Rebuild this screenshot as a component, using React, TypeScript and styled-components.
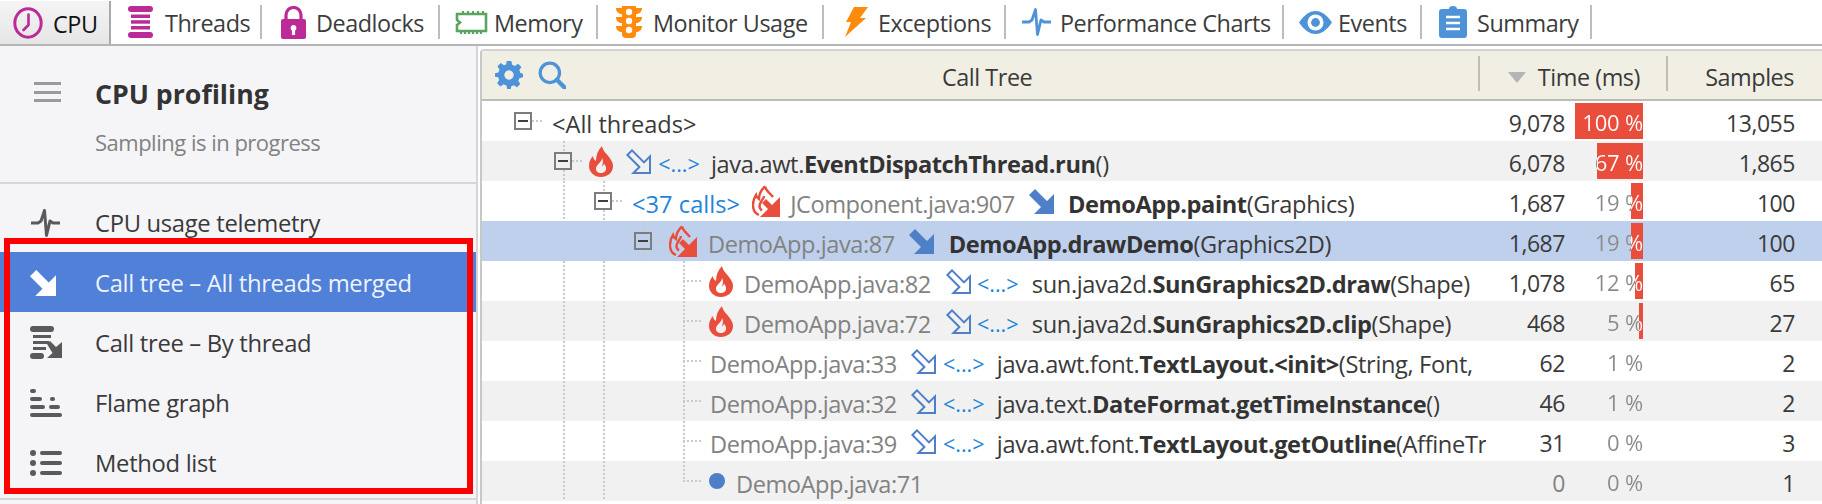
import React from "react";
import styled, { createGlobalStyle } from "styled-components";

const FONT = `"Open Sans", "Noto Sans", "Liberation Sans", sans-serif`;
const RED = "#e94e3d";
const BLUE = "#4e93d8";
const ARROW = "#4f7fc9";
const MAG = "#bb2a96";

const Global = createGlobalStyle`
  html, body { margin: 0; padding: 0; background: #fff; overflow: hidden; }
  body { font-family: ${FONT}; color: #333; }
  * { box-sizing: border-box; }
`;

const Page = styled.div`
  width: 1822px;
  height: 504px;
  display: flex;
  flex-direction: column;
  position: relative;
  overflow: hidden;
`;

/* ---------- toolbar ---------- */
const Toolbar = styled.div`
  height: 46px;
  flex: none;
  display: flex;
  border-bottom: 2px solid #b5b5b5;
`;
const Tab = styled.div<{ $w: number; $pl: number; $gap: number }>`
  width: ${(p) => p.$w}px;
  height: 44px;
  padding-left: ${(p) => p.$pl}px;
  display: flex;
  align-items: center;
  gap: ${(p) => p.$gap}px;
  position: relative;
  font-size: 23.4px;
  letter-spacing: -0.45px;
  color: #3c3c3c;
  &::after {
    content: "";
    position: absolute;
    right: 0;
    top: 5px;
    bottom: 5px;
    width: 2px;
    background: #bdbdbd;
  }
`;
const ActiveTab = styled(Tab)`
  background: linear-gradient(#f4f4f4, #e6e6e6);
  color: #111;
  margin-top: 1px;
  height: 43px;
  &::after {
    top: 0;
    bottom: 0;
    background: #a9a9a9;
  }
`;
const TabLabel = styled.span`
  margin-top: 2px;
`;

/* ---------- body ---------- */
const Body = styled.div`
  flex: 1;
  display: flex;
  min-height: 0;
`;
const Sidebar = styled.aside`
  width: 478px;
  flex: none;
  background: #f5f5f8;
  border-right: 2px solid #d6d6d8;
  display: flex;
  flex-direction: column;
  padding-top: 2px;
`;
const SideHead = styled.div`
  height: 136px;
  border-bottom: 2px solid #d6d6d8;
  display: grid;
  grid-template-columns: 95px 1fr;
  align-content: start;
`;
const Burger = styled.div`
  margin: 34px 0 0 34px;
  width: 27px;
  height: 20px;
  border-top: 3px solid #9a9a9a;
  border-bottom: 3px solid #9a9a9a;
  position: relative;
  &::after {
    content: "";
    position: absolute;
    left: 0;
    right: 0;
    top: 5.5px;
    height: 3px;
    background: #9a9a9a;
  }
`;
const SideTitle = styled.div`
  margin-top: 26px;
  font-size: 26.7px;
  font-weight: 700;
  line-height: 40px;
  letter-spacing: 0;
  color: #333;
`;
const SideSub = styled.div`
  grid-column: 2;
  margin-top: 13px;
  font-size: 22px;
  line-height: 30px;
  letter-spacing: -0.5px;
  color: #828282;
`;
const SideList = styled.div`
  padding-top: 8px;
  flex: 1;
`;
const SideItem = styled.div<{ $active?: boolean }>`
  height: 60px;
  display: flex;
  align-items: center;
  padding: 1px 0 0 30px;
  font-size: 23.8px;
  letter-spacing: -0.32px;
  color: ${(p) => (p.$active ? "#eef3fb" : "#3a3a3a")};
  background: ${(p) => (p.$active ? "#5080d8" : "transparent")};
`;
const SideIcon = styled.span`
  width: 65px;
  flex: none;
  display: flex;
  align-items: center;
`;
const SideFoot = styled.div`
  height: 6px;
  border-top: 2px solid #d6d6d8;
  flex: none;
`;
const Highlight = styled.div`
  position: absolute;
  left: 4px;
  top: 238px;
  width: 469px;
  height: 256px;
  border: 6px solid #ff0000;
  pointer-events: none;
`;

/* ---------- tree table ---------- */
const Panel = styled.section`
  flex: 1;
  margin: 3px 0 0 2px;
  border-top: 2px solid #d2d2d2;
  border-left: 2px solid #c8c8c8;
  border-top-left-radius: 4px;
  min-width: 0;
  overflow: hidden;
`;
const Head = styled.div`
  height: 50px;
  display: grid;
  grid-template-columns: 997px 188px 1fr;
  background: #f1efe4;
  border-bottom: 2px solid #bdbcb4;
  font-size: 23.4px;
  letter-spacing: -0.45px;
  color: #3a3a3a;
`;
const HeadMain = styled.div`
  display: flex;
  align-items: center;
  padding-left: 13px;
  gap: 15px;
  position: relative;
`;
const HeadTitle = styled.span`
  margin: 3px 0 0 361px;
`;
const HeadCol = styled.div<{ $pr: number }>`
  display: flex;
  align-items: center;
  justify-content: flex-end;
  gap: 12px;
  padding: 3px ${(p) => p.$pr}px 0 0;
  position: relative;
  &::before {
    content: "";
    position: absolute;
    left: -1px;
    top: 5px;
    bottom: 8px;
    width: 2px;
    background: #bfbeb6;
  }
`;
const SortMark = styled.span`
  width: 0;
  height: 0;
  border-left: 9px solid transparent;
  border-right: 9px solid transparent;
  border-top: 11px solid #b5b5b5;
  margin-top: 2px;
`;
const Row = styled.div<{ $tone: "plain" | "alt" | "sel" }>`
  height: 40px;
  display: grid;
  grid-template-columns: 1004px 79px 78px 152px;
  position: relative;
  background: ${(p) => (p.$tone === "sel" ? "#bfd0ec" : p.$tone === "alt" ? "#f1f1f1" : "#fff")};
`;
const TreeCell = styled.div<{ $indent: number }>`
  padding: 5px 0 0 ${(p) => p.$indent}px;
  display: flex;
  align-items: center;
  overflow: hidden;
  white-space: nowrap;
  font-size: 23.6px;
  letter-spacing: -0.35px;
  color: #3a3a3a;
`;
const VGuide = styled.span<{ $x: number; $from: number; $to: number }>`
  position: absolute;
  left: ${(p) => p.$x}px;
  top: ${(p) => p.$from}px;
  height: ${(p) => p.$to - p.$from}px;
  width: 2px;
  background: repeating-linear-gradient(#cacaca 0 2px, transparent 2px 4px);
`;
const HGuide = styled.span<{ $x: number; $w: number }>`
  position: absolute;
  left: ${(p) => p.$x}px;
  top: 19px;
  width: ${(p) => p.$w}px;
  height: 2px;
  background: repeating-linear-gradient(90deg, #cacaca 0 2px, transparent 2px 4px);
`;
const Expander = styled.span`
  width: 18px;
  height: 18px;
  flex: none;
  margin-top: -5px;
  border: 2px solid #7d7d7d;
  display: flex;
  align-items: center;
  justify-content: center;
  &::after {
    content: "";
    width: 10px;
    height: 2px;
    background: #3f3f3f;
  }
`;
const Slot = styled.span<{ $ml: number }>`
  margin: -5px 0 0 ${(p) => p.$ml}px;
  display: inline-flex;
  flex: none;
  align-items: center;
`;
const Dim = styled.span<{ $ml: number }>`
  margin-left: ${(p) => p.$ml}px;
  color: #828282;
  letter-spacing: -0.45px;
`;
const Plain = styled.span<{ $ml: number }>`
  margin-left: ${(p) => p.$ml}px;
`;
const RootLabel = styled(Plain)`
  letter-spacing: 0;
`;
const LinkText = styled.span<{ $ml: number }>`
  margin-left: ${(p) => p.$ml}px;
  color: #1f84dc;
  letter-spacing: 0.05px;
`;
const Dots = styled.span<{ $ml: number }>`
  margin-left: ${(p) => p.$ml}px;
  width: 42px;
  flex: none;
  color: #1f84dc;
  font-size: 21.5px;
  letter-spacing: 0;
  text-align: center;
`;
const Strong = styled.b`
  font-weight: 700;
  letter-spacing: -0.42px;
  color: #333;
`;
const Dot = styled.span`
  width: 16px;
  height: 16px;
  margin-top: -5px;
  border-radius: 50%;
  background: ${ARROW};
  flex: none;
`;
const Num = styled.div<{ $dim?: boolean }>`
  display: flex;
  align-items: center;
  justify-content: flex-end;
  padding-top: 4px;
  font-size: 23px;
  letter-spacing: -0.45px;
  color: ${(p) => (p.$dim ? "#828282" : "#3a3a3a")};
`;
const PctCell = styled.div`
  position: relative;
  margin-left: 10px;
  width: 68px;
  padding-top: 2px;
  display: flex;
  align-items: center;
  justify-content: flex-end;
  font-size: 22px;
  letter-spacing: -0.2px;
  white-space: nowrap;
`;
const PctBar = styled.span<{ $w: number }>`
  position: absolute;
  right: 0;
  top: 2px;
  bottom: 2px;
  width: ${(p) => p.$w}px;
  background: ${RED};
`;
const PctText = styled.span<{ $w: number }>`
  position: relative;
  color: transparent;
  background: linear-gradient(
    to left,
    #fff ${(p) => p.$w}px,
    #8a8a8a ${(p) => p.$w}px
  );
  -webkit-background-clip: text;
  background-clip: text;
`;

/* ---------- drawings ---------- */
const Svg = styled.svg`
  display: block;
  flex: none;
`;

const ClockIcon = () => (
  <Svg width="30" height="32" viewBox="0 0 30 32">
    <ellipse cx="15" cy="16" rx="13.2" ry="14.2" fill="none" stroke={MAG} strokeWidth="3" />
    <path d="M15.5 7.5 V18 L10.5 23" fill="none" stroke={MAG} strokeWidth="2.6" strokeLinecap="round" strokeLinejoin="round" />
  </Svg>
);
const ThreadsIcon = () => (
  <Svg width="25" height="32" viewBox="0 0 25 32" fill={MAG}>
    <rect x="0" y="0" width="25" height="6" rx="3" />
    <rect x="3" y="8.5" width="19" height="3.5" />
    <rect x="3" y="14.2" width="19" height="3.5" />
    <rect x="3" y="20" width="19" height="3.5" />
    <rect x="0" y="26" width="25" height="6" rx="3" />
  </Svg>
);
const LockIcon = () => (
  <Svg width="25" height="33" viewBox="0 0 25 33">
    <path d="M5 14 V9 a7.5 7.5 0 0 1 15 0 V14" fill="none" stroke={MAG} strokeWidth="3.2" />
    <path fillRule="evenodd" fill={MAG} d="M2 13 H23 a2 2 0 0 1 2 2 V31 a2 2 0 0 1 -2 2 H2 a2 2 0 0 1 -2 -2 V15 a2 2 0 0 1 2 -2 Z M12.5 19 a3 3 0 0 0 -1.6 5.5 V29 h3.2 V24.5 A3 3 0 0 0 12.5 19 Z" />
  </Svg>
);
const MemoryIcon = () => (
  <Svg width="33" height="25" viewBox="0 0 33 25">
    <path d="M2 4 H31 V21 H2 V15 L5 12.5 L2 10 Z" fill="none" stroke="#5aa45f" strokeWidth="2.6" />
    <path d="M8 1 V4 M13 1 V4 M18 1 V4 M23 1 V4 M28 1 V4 M6 21 V24 M10 21 V24 M14 21 V24 M18 21 V24 M22 21 V24 M26 21 V24" stroke="#5aa45f" strokeWidth="2.2" />
  </Svg>
);
const TrafficIcon = () => (
  <Svg width="26" height="32" viewBox="0 0 26 32">
    <path d="M0 2 H6 V0 H20 V2 H26 C26 6 23 8 20 8 V11 H26 C26 15 23 17 20 17 V20 H26 C26 24 23 26 20 26 V28 a4 4 0 0 1 -4 4 H10 a4 4 0 0 1 -4 -4 V26 C3 26 0 24 0 20 H6 V17 C3 17 0 15 0 11 H6 V8 C3 8 0 6 0 2 Z" fill="#ff8b0d" />
    <circle cx="13" cy="6" r="3.2" fill="#fff" />
    <circle cx="13" cy="15" r="3.2" fill="#fff" />
    <circle cx="13" cy="24" r="3.2" fill="#fff" />
  </Svg>
);
const BoltIcon = () => (
  <Svg width="23" height="30" viewBox="0 0 23 30">
    <path d="M9 0 H23 L15 11 H21 L0 30 L6 15 H1 Z" fill="#ff8b0d" />
  </Svg>
);
const PulseIcon = ({ color, w, h, sw }: { color: string; w: number; h: number; sw: number }) => (
  <Svg width={w} height={h} viewBox="0 0 31 28">
    <path d="M1 14 H8 L11 12 L14.5 1.5 L16.5 26.5 L20 12 L23 14 H30" fill="none" stroke={color} strokeWidth={sw} strokeLinejoin="round" />
  </Svg>
);
const EyeIcon = () => (
  <Svg width="33" height="23" viewBox="0 0 33 23">
    <path d="M0 11.5 C6 3 11 0 16.5 0 S27 3 33 11.5 C27 20 22 23 16.5 23 S6 20 0 11.5 Z" fill={BLUE} />
    <circle cx="16.5" cy="11.5" r="8" fill="#fff" />
    <circle cx="16.5" cy="11.5" r="4.4" fill={BLUE} />
  </Svg>
);
const ClipIcon = () => (
  <Svg width="28" height="32" viewBox="0 0 28 32">
    <path d="M3 3 H10 a4 3 0 0 1 8 0 H25 a3 3 0 0 1 3 3 V29 a3 3 0 0 1 -3 3 H3 a3 3 0 0 1 -3 -3 V6 a3 3 0 0 1 3 -3 Z" fill={BLUE} />
    <path d="M7 11 H21 M7 17 H21 M7 23 H21" stroke="#fff" strokeWidth="2.4" />
  </Svg>
);
const GearIcon = () => (
  <Svg width="28" height="28" viewBox="0 0 24 24">
    <path
      fill={BLUE}
      fillRule="evenodd"
      d="M10 0 H14 L14.7 3.2 A9 9 0 0 1 17 4.2 L19.8 2.4 L22.6 5.2 L20.8 8 A9 9 0 0 1 21.8 10.3 L24 11 V14 L20.9 14.7 A9 9 0 0 1 19.9 17 L21.7 19.8 L18.9 22.6 L16.1 20.8 A9 9 0 0 1 14 21.7 L13.5 24 H10.5 L9.8 21 A9 9 0 0 1 7.4 20 L4.6 21.8 L1.8 19 L3.6 16.2 A9 9 0 0 1 2.7 14 L0 13.5 V10.5 L2.9 9.8 A9 9 0 0 1 3.9 7.4 L2.1 4.6 L4.9 1.8 L7.7 3.6 A9 9 0 0 1 9.6 2.9 Z M12 8 a4 4 0 1 0 0.01 0 Z"
    />
  </Svg>
);
const SearchIcon = () => (
  <Svg width="28" height="28" viewBox="0 0 26 26">
    <circle cx="11" cy="11" r="9" fill="none" stroke={BLUE} strokeWidth="3" />
    <path d="M17.5 17.5 L24.5 24.5" stroke={BLUE} strokeWidth="4" strokeLinecap="round" />
  </Svg>
);
const SolidFlame = () => (
  <Svg width="24" height="31" viewBox="0 0 24 31">
    <path
      fill={RED}
      fillRule="evenodd"
      d="M13 0 C14 5 17 7 20 11 C23 15 24 17 24 20 C24 27 18 31 12 31 C5 31 0 26 0 20 C0 15 2 12 4 10 C4 12 5 14 7 15 C7 9 9 4 13 0 Z M13 12 C13 16 8 18 7 22 C6.5 25 9 27 12 27 C15.5 27 17.5 24.5 17 21.5 C16.7 19.5 15.5 19 15 17.5 C14.5 19 14 20 13 20.5 C14 17 14.5 15 13 12 Z"
    />
  </Svg>
);
const ArrowFlame = () => (
  <Svg width="28" height="32" viewBox="0 0 28 32">
    <path
      d="M13 1.5 C14 6 18 8 21 12 M13 1.5 C9 5 7 9 7 14 C5.5 13 4.5 12 4 10 C2 13 1 16 1 20 C1 25 3.5 28.5 7 30"
      fill="none"
      stroke={RED}
      strokeWidth="2.4"
    />
    <path d="M12 11 C12 14 7.5 17 7.5 21 C7.5 23 8.5 24.5 10 25.5" fill="none" stroke={RED} strokeWidth="2.4" />
    <path d="M14 14 L20 20 L28 12 V32 H8 L16 24 L10 18 Z" fill={RED} />
  </Svg>
);
const SolidArrow = ({ color = ARROW, w = 25 }: { color?: string; w?: number }) => (
  <Svg width={w} height={w} viewBox="0 0 25 25">
    <path d="M0 6 L6 0 L18 12 L25 5 V25 H5 L12 18 Z" fill={color} />
  </Svg>
);
const HollowArrow = () => (
  <Svg width="25" height="25" viewBox="0 0 25 25">
    <path d="M1.4 6 L6 1.4 L18 13.4 L24 7.4 V24 H7.4 L13.4 18 Z" fill="none" stroke={ARROW} strokeWidth="2" />
  </Svg>
);
const ByThreadIcon = () => (
  <Svg width="33" height="33" viewBox="0 0 33 33" fill="#5a5a5a">
    <rect x="0" y="0" width="24" height="6" rx="3" />
    <rect x="3" y="9" width="18" height="3" />
    <rect x="3" y="15" width="16" height="3" />
    <rect x="3" y="21" width="13" height="3" />
    <rect x="0" y="27" width="14" height="6" rx="3" />
    <path d="M17 18 L20 15 L26 21 L32 16 V32 H17 L22.5 27 Z" />
  </Svg>
);
const FlameGraphIcon = () => (
  <Svg width="32" height="28" viewBox="0 0 32 28" fill="#5a5a5a">
    <rect x="0" y="0" width="6" height="4" rx="2" />
    <rect x="0" y="8" width="12" height="4" rx="2" />
    <rect x="20" y="8" width="5" height="4" rx="2" />
    <rect x="0" y="16" width="15" height="4" rx="2" />
    <rect x="19" y="16" width="11" height="4" rx="2" />
    <rect x="0" y="24" width="32" height="4" rx="2" />
  </Svg>
);
const ListIcon = () => (
  <Svg width="32" height="26" viewBox="0 0 32 26" fill="#5a5a5a">
    <circle cx="3" cy="3" r="3" />
    <circle cx="3" cy="13" r="3" />
    <circle cx="3" cy="23" r="3" />
    <rect x="10" y="1" width="22" height="4" rx="2" />
    <rect x="10" y="11" width="22" height="4" rx="2" />
    <rect x="10" y="21" width="22" height="4" rx="2" />
  </Svg>
);

/* ---------- data ---------- */
const tabs = [
  { w: 151, pl: 17, gap: 12, icon: <ThreadsIcon />, label: "Threads" },
  { w: 178, pl: 19, gap: 10, icon: <LockIcon />, label: "Deadlocks" },
  { w: 158, pl: 15, gap: 6, icon: <MemoryIcon />, label: "Memory" },
  { w: 226, pl: 18, gap: 11, icon: <TrafficIcon />, label: "Monitor Usage" },
  { w: 182, pl: 21, gap: 10, icon: <BoltIcon />, label: "Exceptions" },
  { w: 278, pl: 15, gap: 8, icon: <PulseIcon color={BLUE} w={31} h={28} sw={2.8} />, label: "Performance Charts" },
  { w: 138, pl: 15, gap: 6, icon: <EyeIcon />, label: "Events" },
  { w: 170, pl: 17, gap: 10, icon: <ClipIcon />, label: "Summary" },
];

const V = (x: number, from = 0, to = 40) => <VGuide key={`${x}-${from}`} $x={x} $from={from} $to={to} />;

type RowData = {
  tone: "plain" | "alt" | "sel";
  indent: number;
  guides: React.ReactNode;
  tree: React.ReactNode;
  time: string;
  timeDim?: boolean;
  pct: string;
  bar: number;
  samples: string;
};

const leafGuides = (
  <>
    {V(81)}
    {V(121)}
    {V(201)}
    <HGuide $x={201} $w={20} />
  </>
);

const rows: RowData[] = [
  {
    tone: "plain",
    indent: 32,
    guides: <HGuide $x={50} $w={10} />,
    tree: (
      <>
        <Expander />
        <RootLabel $ml={20}>{"<All threads>"}</RootLabel>
      </>
    ),
    time: "9,078",
    pct: "100 %",
    bar: 68,
    samples: "13,055",
  },
  {
    tone: "alt",
    indent: 72,
    guides: (
      <>
        {V(81, 0, 11)}
        {V(81, 29, 40)}
        <HGuide $x={90} $w={10} />
      </>
    ),
    tree: (
      <>
        <Expander />
        <Slot $ml={17}><SolidFlame /></Slot>
        <Slot $ml={13}><HollowArrow /></Slot>
        <Dots $ml={7}>{"<...>"}</Dots>
        <Plain $ml={11}>java.awt.<Strong>EventDispatchThread.run</Strong>()</Plain>
      </>
    ),
    time: "6,078",
    pct: "67 %",
    bar: 46,
    samples: "1,865",
  },
  {
    tone: "plain",
    indent: 112,
    guides: (
      <>
        {V(81)}
        {V(121, 0, 11)}
        {V(121, 29, 40)}
        <HGuide $x={130} $w={10} />
      </>
    ),
    tree: (
      <>
        <Expander />
        <LinkText $ml={20}>{"<37 calls>"}</LinkText>
        <Slot $ml={12}><ArrowFlame /></Slot>
        <Dim $ml={10}>JComponent.java:907</Dim>
        <Slot $ml={14}><SolidArrow /></Slot>
        <Plain $ml={14}><Strong>DemoApp.paint</Strong>(Graphics)</Plain>
      </>
    ),
    time: "1,687",
    pct: "19 %",
    bar: 12,
    samples: "100",
  },
  {
    tone: "sel",
    indent: 152,
    guides: (
      <>
        {V(161, 0, 11)}
        {V(161, 29, 40)}
        <HGuide $x={170} $w={10} />
      </>
    ),
    tree: (
      <>
        <Expander />
        <Slot $ml={17}><ArrowFlame /></Slot>
        <Dim $ml={11}>DemoApp.java:87</Dim>
        <Slot $ml={14}><SolidArrow /></Slot>
        <Plain $ml={15}><Strong>DemoApp.drawDemo</Strong>(Graphics2D)</Plain>
      </>
    ),
    time: "1,687",
    pct: "19 %",
    bar: 12,
    samples: "100",
  },
  {
    tone: "plain",
    indent: 227,
    guides: leafGuides,
    tree: (
      <>
        <Slot $ml={0}><SolidFlame /></Slot>
        <Dim $ml={11}>DemoApp.java:82</Dim>
        <Slot $ml={15}><HollowArrow /></Slot>
        <Dots $ml={6}>{"<...>"}</Dots>
        <Plain $ml={13}>sun.java2d.<Strong>SunGraphics2D.draw</Strong>(Shape)</Plain>
      </>
    ),
    time: "1,078",
    pct: "12 %",
    bar: 8,
    samples: "65",
  },
  {
    tone: "alt",
    indent: 227,
    guides: leafGuides,
    tree: (
      <>
        <Slot $ml={0}><SolidFlame /></Slot>
        <Dim $ml={11}>DemoApp.java:72</Dim>
        <Slot $ml={15}><HollowArrow /></Slot>
        <Dots $ml={6}>{"<...>"}</Dots>
        <Plain $ml={13}>sun.java2d.<Strong>SunGraphics2D.clip</Strong>(Shape)</Plain>
      </>
    ),
    time: "468",
    pct: "5 %",
    bar: 4,
    samples: "27",
  },
  {
    tone: "plain",
    indent: 228,
    guides: leafGuides,
    tree: (
      <>
        <Dim $ml={0}>DemoApp.java:33</Dim>
        <Slot $ml={14}><HollowArrow /></Slot>
        <Dots $ml={7}>{"<...>"}</Dots>
        <Plain $ml={12}>java.awt.font.<Strong>TextLayout.&lt;init&gt;</Strong>(String, Font,</Plain>
      </>
    ),
    time: "62",
    pct: "1 %",
    bar: 0,
    samples: "2",
  },
  {
    tone: "alt",
    indent: 228,
    guides: leafGuides,
    tree: (
      <>
        <Dim $ml={0}>DemoApp.java:32</Dim>
        <Slot $ml={14}><HollowArrow /></Slot>
        <Dots $ml={7}>{"<...>"}</Dots>
        <Plain $ml={12}>java.text.<Strong>DateFormat.getTimeInstance</Strong>()</Plain>
      </>
    ),
    time: "46",
    pct: "1 %",
    bar: 0,
    samples: "2",
  },
  {
    tone: "plain",
    indent: 228,
    guides: leafGuides,
    tree: (
      <>
        <Dim $ml={0}>DemoApp.java:39</Dim>
        <Slot $ml={14}><HollowArrow /></Slot>
        <Dots $ml={7}>{"<...>"}</Dots>
        <Plain $ml={12}>java.awt.font.<Strong>TextLayout.getOutline</Strong>(AffineTr</Plain>
      </>
    ),
    time: "31",
    pct: "0 %",
    bar: 0,
    samples: "3",
  },
  {
    tone: "alt",
    indent: 227,
    guides: (
      <>
        {V(81)}
        {V(121)}
        {V(201, 0, 21)}
        <HGuide $x={201} $w={20} />
      </>
    ),
    tree: (
      <>
        <Dot />
        <Dim $ml={11}>DemoApp.java:71</Dim>
      </>
    ),
    time: "0",
    timeDim: true,
    pct: "0 %",
    bar: 0,
    samples: "1",
  },
];

export default function App() {
  return (
    <Page>
      <Global />
      <Toolbar>
        <ActiveTab $w={111} $pl={13} $gap={10}>
          <ClockIcon />
          <TabLabel>CPU</TabLabel>
        </ActiveTab>
        {tabs.map((t) => (
          <Tab key={t.label} $w={t.w} $pl={t.pl} $gap={t.gap}>
            {t.icon}
            <TabLabel>{t.label}</TabLabel>
          </Tab>
        ))}
      </Toolbar>
      <Body>
        <Sidebar>
          <SideHead>
            <Burger />
            <SideTitle>CPU profiling</SideTitle>
            <SideSub>Sampling is in progress</SideSub>
          </SideHead>
          <SideList>
            <SideItem>
              <SideIcon><PulseIcon color="#5a5a5a" w={31} h={28} sw={3} /></SideIcon>
              CPU usage telemetry
            </SideItem>
            <SideItem $active>
              <SideIcon><SolidArrow color="#fff" w={26} /></SideIcon>
              Call tree – All threads merged
            </SideItem>
            <SideItem>
              <SideIcon><ByThreadIcon /></SideIcon>
              Call tree – By thread
            </SideItem>
            <SideItem>
              <SideIcon><FlameGraphIcon /></SideIcon>
              Flame graph
            </SideItem>
            <SideItem>
              <SideIcon><ListIcon /></SideIcon>
              Method list
            </SideItem>
          </SideList>
          <SideFoot />
        </Sidebar>
        <Panel>
          <Head>
            <HeadMain>
              <GearIcon />
              <SearchIcon />
              <HeadTitle>Call Tree</HeadTitle>
            </HeadMain>
            <HeadCol $pr={27}>
              <SortMark />
              Time (ms)
            </HeadCol>
            <HeadCol $pr={28}>Samples</HeadCol>
          </Head>
          {rows.map((r, i) => (
            <Row key={i} $tone={r.tone}>
              {r.guides}
              <TreeCell $indent={r.indent}>{r.tree}</TreeCell>
              <Num $dim={r.timeDim}>{r.time}</Num>
              <PctCell>
                {r.bar > 0 && <PctBar $w={r.bar} />}
                <PctText $w={r.bar}>{r.pct}</PctText>
              </PctCell>
              <Num>{r.samples}</Num>
            </Row>
          ))}
        </Panel>
      </Body>
      <Highlight />
    </Page>
  );
}
